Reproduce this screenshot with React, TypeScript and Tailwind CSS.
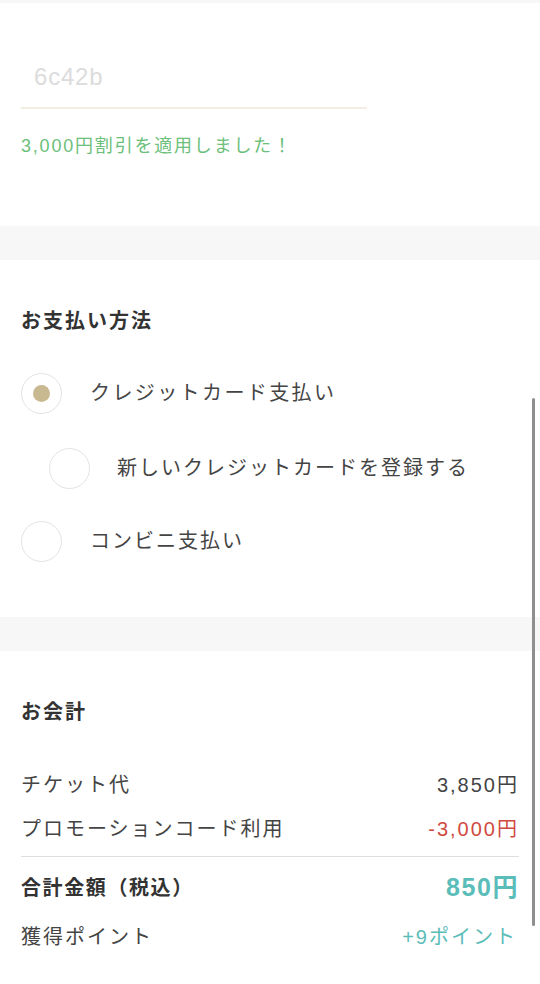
import React from 'react';

const font = "font-['Liberation_Sans','Noto_Sans_CJK_JP',sans-serif]";

function Radio({ checked }: { checked?: boolean }) {
  return (
    <div className="w-[41px] h-[41px] shrink-0 rounded-full border-[1.5px] border-[#e3e3e3] flex items-center justify-center bg-white">
      {checked && <div className="w-[17px] h-[17px] rounded-full bg-[#c8b991]" />}
    </div>
  );
}

function Row({ label, value, valueClass }: { label: string; value: string; valueClass: string }) {
  return (
    <div className="flex items-center justify-between h-[30px] text-[20px] leading-[30px] tracking-[0.1em]">
      <span className="text-[#444]">{label}</span>
      <span className={valueClass}>{value}</span>
    </div>
  );
}

export default function App() {
  return (
    <div className={`relative w-[540px] min-h-[984px] bg-white text-[#333] ${font}`}>
      <div className="h-[3px] bg-[#f7f7f7]" />

      {/* promo code */}
      <section className="px-[21px] pt-[54px] pb-[68px]">
        <div className="w-[346px] pt-[8px] pb-[18px] pl-[13px] border-b-2 border-[#f4ede3]">
          <span className="block text-[24px] leading-[24px] tracking-[0.8px] text-[#dcdcdc]">6c42b</span>
        </div>
        <p className="mt-[25px] text-[18px] leading-[24px] tracking-[0.1em] text-[#6cc07b]">3,000円割引を適用しました！</p>
      </section>

      <div className="h-[34px] bg-[#f7f7f7]" />

      {/* payment method */}
      <section className="px-[21px] pt-[47px] pb-[56px]">
        <h2 className="text-[20px] leading-[28px] font-bold tracking-[0.1em] text-[#333]">お支払い方法</h2>
        <div className="mt-[38px] flex items-center gap-[28px] h-[40px]">
          <Radio checked />
          <span className="text-[20px] tracking-[0.12em] text-[#444]">クレジットカード支払い</span>
        </div>
        <div className="mt-[35px] ml-[28px] flex items-center gap-[27px] h-[40px]">
          <Radio />
          <span className="text-[20px] tracking-[0.1em] text-[#444]">新しいクレジットカードを登録する</span>
        </div>
        <div className="mt-[33px] flex items-center gap-[28px] h-[40px]">
          <Radio />
          <span className="text-[20px] tracking-[0.1em] text-[#444]">コンビニ支払い</span>
        </div>
      </section>

      <div className="h-[34px] bg-[#f7f7f7]" />

      {/* total */}
      <section className="px-[21px] pt-[47px] pb-[48px]">
        <h2 className="text-[20px] leading-[28px] font-bold tracking-[0.1em] text-[#333]">お会計</h2>
        <div className="mt-[44px] flex flex-col gap-[14px]">
          <Row label="チケット代" value="3,850円" valueClass="text-[#444]" />
          <Row label="プロモーションコード利用" value="-3,000円" valueClass="text-[#cf4a41]" />
        </div>
        <div className="mt-[12px] h-px bg-[#dedede]" />
        <div className="mt-[15px] flex items-center justify-between h-[32px] tracking-[0.1em]">
          <span className="text-[20px] font-bold text-[#333]">合計金額（税込）</span>
          <span className="text-[25px] font-bold text-[#5bbdb9]">850円</span>
        </div>
        <div className="mt-[18px]">
          <Row label="獲得ポイント" value="+9ポイント" valueClass="text-[#5bbdb9] pr-[2px]" />
        </div>
      </section>

      {/* scroll indicator */}
      <div className="absolute right-[5px] top-[398px] w-[3px] h-[528px] rounded-full bg-[#8f8f8f]" />
    </div>
  );
}
